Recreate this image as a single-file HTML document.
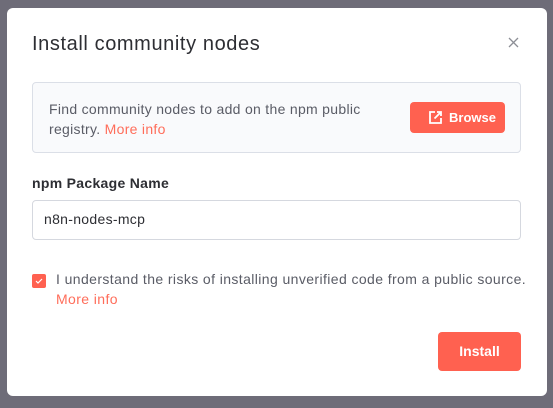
<!DOCTYPE html>
<html><head><style>
body{margin:0;width:553px;height:408px;background:#6e6c78;font-family:"Liberation Sans",sans-serif;position:relative;overflow:hidden}
.d{position:absolute;left:7px;top:8px;width:540px;height:388px;background:#fff;border-radius:6px}
.a{position:absolute;white-space:nowrap}
</style></head><body>
<div class="d"></div>
<div class="a" style="left:32px;top:33px;font-size:20px;color:#2d2e33;letter-spacing:0.6px">Install community nodes</div>
<svg class="a" style="left:508px;top:37px" width="11" height="11"><path d="M1 1L10 10M10 1L1 10" stroke="#8d8f96" stroke-width="1.3"/></svg>
<div class="a" style="left:32px;top:82px;width:487px;height:69px;background:#f9fafc;border:1px solid #dbdfe7;border-radius:4px"></div>
<div class="a" style="left:49px;top:99px;font-size:14px;line-height:20px;color:#5a5c66;letter-spacing:0.3px">Find community nodes to add on the npm public<br>registry. <span style="color:#ff6d5a">More info</span></div>
<div class="a" style="left:410px;top:102px;width:95px;height:31px;background:#ff6150;border-radius:4px;color:#fff;font-size:13px;font-weight:bold;line-height:31px">
<svg class="a" style="left:19px;top:9px" width="13" height="13"><path d="M6 1H1V12H12V7M8 1H12V5M12 1L5.5 7.5" stroke="#fff" stroke-width="1.8" fill="none"/></svg>
<span class="a" style="left:39px">Browse</span></div>
<div class="a" style="left:32px;top:175px;font-size:14px;font-weight:bold;color:#2d2e33;letter-spacing:0.3px">npm Package Name</div>
<div class="a" style="left:32px;top:200px;width:487px;height:38px;border:1px solid #d5d8df;border-radius:4px"></div>
<div class="a" style="left:44px;top:211px;font-size:14px;color:#2d2e33;letter-spacing:0.3px">n8n-nodes-mcp</div>
<div class="a" style="left:32px;top:274px;width:14px;height:14px;background:#ff6150;border-radius:2px"><svg width="14" height="14"><path d="M4 7L6 9L10 5" stroke="#fff" stroke-width="1.2" fill="none"/></svg></div>
<div class="a" style="left:56px;top:269px;font-size:14px;line-height:20px;color:#5a5c66;letter-spacing:0.4px">I understand the risks of installing unverified code from a public source.<br><span style="color:#ff6d5a">More info</span></div>
<div class="a" style="left:438px;top:332px;width:83px;height:39px;background:#ff6150;border-radius:4px;color:#fff;font-size:14px;font-weight:bold;text-align:center;line-height:39px">Install</div>
</body></html>
